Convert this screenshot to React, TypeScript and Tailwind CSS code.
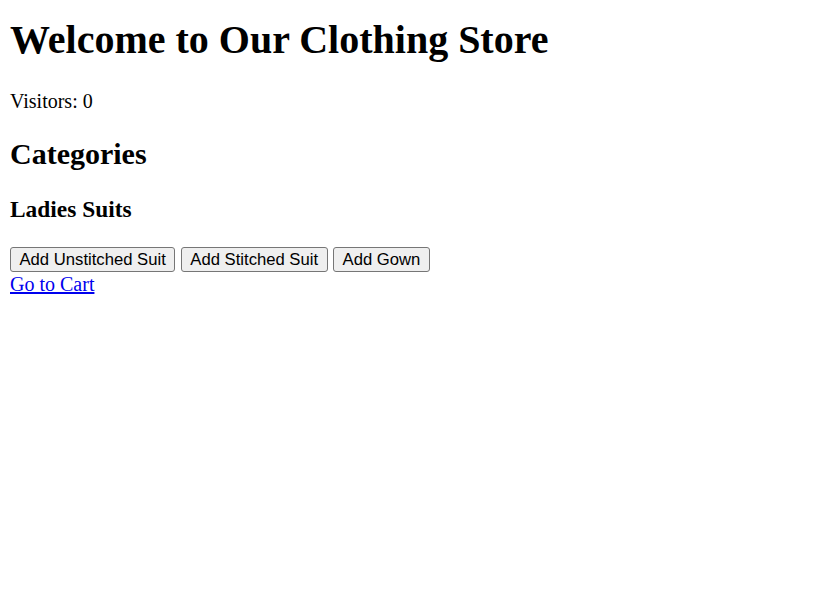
import React, { useState } from 'react';

const categories = ['Add Unstitched Suit', 'Add Stitched Suit', 'Add Gown'];

const App: React.FC = () => {
    const [visitors] = useState(0);

    return (
        <div className="min-h-screen bg-white px-[10px] pt-[16.5px] font-['Liberation_Serif',serif] text-[20px] text-black">
            <h1 className="text-[40px] leading-[46px] font-bold">Welcome to Our Clothing Store</h1>
            <p className="mt-[27px] leading-[23px]">Visitors: {visitors}</p>

            <h2 className="mt-[24px] text-[30px] leading-[34px] font-bold">Categories</h2>
            <div>
                <h3 className="mt-[25px] text-[23.4px] leading-[27px] font-bold">Ladies Suits</h3>
                <div className="mt-[24px] flex h-[26px] items-start gap-[5.5px]">
                    {categories.map((label) => (
                        <button
                            key={label}
                            className="h-[25.5px] rounded-[3px] border border-[#767676] bg-[#efefef] px-[8.5px] font-['Liberation_Sans',sans-serif] text-[16.67px] leading-[19px] text-black hover:bg-[#e5e5e5]"
                        >
                            {label}
                        </button>
                    ))}
                </div>
            </div>
            <a href="#" className="block w-fit text-[#0000ee] underline leading-[23px]">
                Go to Cart
            </a>
        </div>
    );
};

export default App;
